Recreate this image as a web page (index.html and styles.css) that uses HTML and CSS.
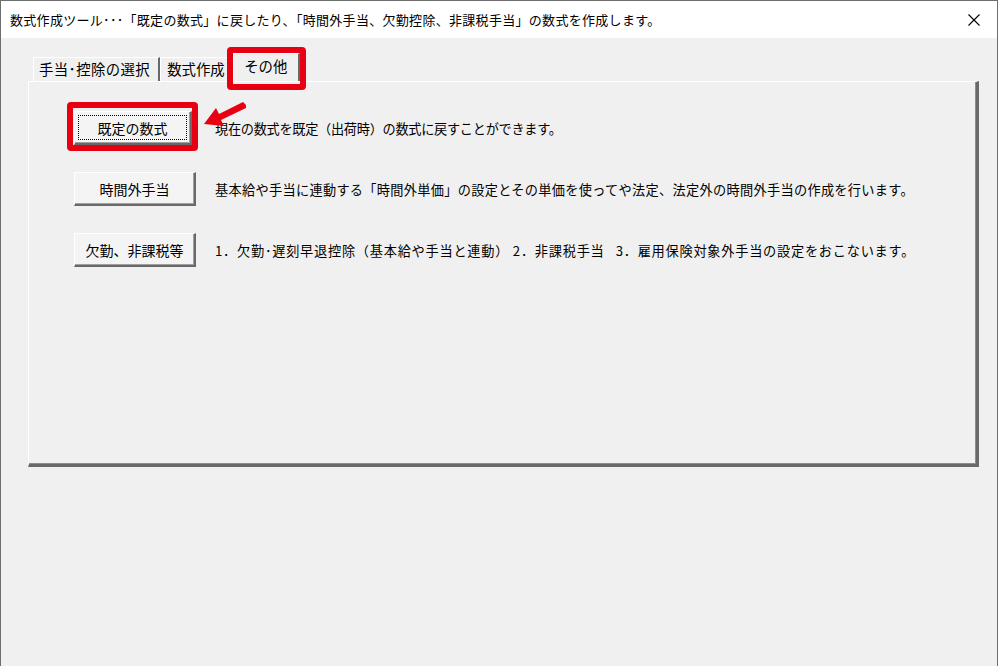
FILE: index.html
```html
<!DOCTYPE html>
<html lang="ja">
<head>
    <meta charset="UTF-8">
    <meta name="viewport" content="width=device-width, initial-scale=1.0">
    <title>数式作成ツール</title>
    <link rel="stylesheet" href="styles.css">
</head>
<body>

    <div class="window">
        <div class="titlebar">
            <span class="title">数式作成ツール･･･「既定の数式」に戻したり、「時間外手当、欠勤控除、非課税手当」の数式を作成します。</span>
            <button class="close" aria-label="閉じる">
                <svg width="12" height="12" viewBox="0 0 12 12">
                    <path d="M0.5 0.5 L11.5 11.5 M11.5 0.5 L0.5 11.5" stroke="#000" stroke-width="1.1" fill="none"/>
                </svg>
            </button>
        </div>

        <div class="dialog">
            <div class="tabs">
                <div class="tab tab-first">手当･控除の選択</div>
                <div class="tab tab-cut">数式作成</div>
                <div class="tab active">その他
                    <span class="mark mark-tab"></span>
                </div>
            </div>

            <div class="panel">
                <div class="row">
                    <div class="btn-wrap">
                        <button class="btn focused"><span>既定の数式</span></button>
                        <span class="mark mark-btn"></span>
                        <svg class="arrow" width="44" height="30" viewBox="0 0 44 30">
                            <polygon points="42,3 39,0 15,12 12,6 0,22 20,24 17,18 42,6" fill="#e60012"/>
                        </svg>
                    </div>
                    <p class="desc desc-narrow">現在の数式を既定（出荷時）の数式に戻すことができます。</p>
                </div>
                <div class="row">
                    <button class="btn"><span>時間外手当</span></button>
                    <p class="desc">基本給や手当に連動する「時間外単価」の設定とその単価を使ってや法定、法定外の時間外手当の作成を行います。</p>
                </div>
                <div class="row">
                    <button class="btn"><span>欠勤、非課税等</span></button>
                    <p class="desc desc-wide">1．欠勤･遅刻早退控除（基本給や手当と連動） 2．非課税手当&nbsp;&nbsp;&nbsp;3．雇用保険対象外手当の設定をおこないます。</p>
                </div>
            </div>
        </div>
    </div>

</body>
</html>
```

FILE: styles.css
```css
:root {
    --face: #f0f0f0;
    --shadow: #696969;
    --shadow-light: #a0a0a0;
    --light: #ffffff;
    --text: #000000;
    --mark: #e60012;
}

* {
    box-sizing: border-box;
    margin: 0;
    padding: 0;
}

body {
    font-family: "Noto Sans CJK JP", "Noto Sans", sans-serif;
    background-color: var(--face);
    color: var(--text);
    width: 998px;
    height: 666px;
    overflow: hidden;
}

.window {
    width: 998px;
    height: 666px;
    border: 1px solid #6e6e6e;
    border-bottom: none;
    background-color: var(--face);
}

.titlebar {
    height: 37px;
    background-color: #ffffff;
    display: flex;
    align-items: center;
    justify-content: space-between;
    padding-left: 9px;
}

.title {
    font-size: 13px;
    letter-spacing: 0.3px;
    white-space: nowrap;
}

.close {
    width: 46px;
    height: 37px;
    border: none;
    background: transparent;
    display: flex;
    align-items: center;
    justify-content: center;
}

.dialog {
    padding: 15px 0 0 27px;
}

.tabs {
    display: flex;
    align-items: flex-end;
    height: 28px;
    padding-left: 5px;
}

.tab {
    position: relative;
    height: 24px;
    padding: 0 6px 0 5px;
    font-size: 14.4px;
    line-height: 22px;
    border-top: 1px solid var(--light);
    border-left: 1px solid var(--light);
    border-right: 2px solid var(--shadow);
    white-space: nowrap;
}

.tab-first {
    padding-right: 8px;
    letter-spacing: 0.4px;
}

.tab-cut {
    width: 73px;
    overflow: hidden;
    border-right: none;
    padding-right: 0;
    padding-left: 6px;
}

.tab.active {
    height: 28px;
    line-height: 24px;
    padding: 0 11px 0 10px;
    border-right: 2px solid var(--shadow);
    background-color: var(--face);
    z-index: 2;
    overflow: visible;
}

.panel {
    width: 951px;
    height: 386px;
    border-top: 1px solid var(--light);
    border-left: 1px solid var(--light);
    border-right: 3px solid var(--shadow);
    border-bottom: 3px solid var(--shadow);
    box-shadow: inset -1px -1px 0 #8c8c8c;
    padding: 29px 0 0 45px;
    display: flex;
    flex-direction: column;
    gap: 27px;
}

.row {
    display: flex;
    align-items: center;
    gap: 19px;
}

.btn-wrap {
    position: relative;
    width: 122px;
}

.btn {
    width: 122px;
    height: 34px;
    font-family: inherit;
    font-size: 14px;
    background-color: #f4f4f4;
    border-top: 1px solid var(--light);
    border-left: 1px solid var(--light);
    border-right: 2px solid var(--shadow);
    border-bottom: 2px solid var(--shadow);
    box-shadow: inset -1px -1px 0 var(--shadow-light);
    color: var(--text);
    padding: 0;
}

.btn.focused {
    width: 118px;
    padding: 3px;
}

.btn.focused span {
    display: flex;
    align-items: center;
    justify-content: center;
    height: 100%;
    border: 1px dotted #000;
}

.desc {
    font-size: 13.2px;
    letter-spacing: 0.3px;
    white-space: nowrap;
}

.desc-narrow {
    letter-spacing: -0.3px;
}

.desc-wide {
    letter-spacing: 0.75px;
}

/* red callouts */
.mark {
    position: absolute;
    border: 6px solid var(--mark);
    border-radius: 4px;
    pointer-events: none;
}

.mark-tab {
    left: -7px;
    top: -7px;
    right: -8px;
    bottom: -9px;
}

.mark-btn {
    left: -7px;
    top: -9px;
    width: 131px;
    height: 49px;
}

.arrow {
    position: absolute;
    left: 130px;
    top: -9px;
}
```
